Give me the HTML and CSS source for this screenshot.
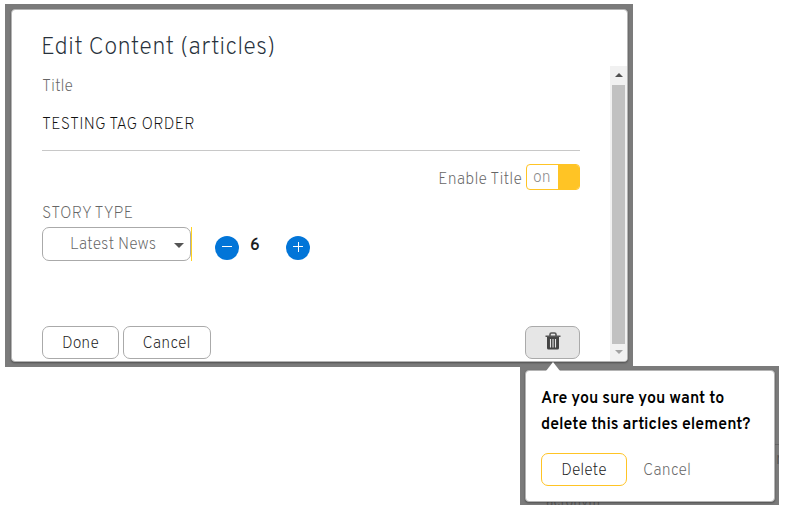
FILE: index.html
```
<!DOCTYPE html>
<html lang="en">
<head>
<meta charset="utf-8">
<title>Edit Content</title>
<link rel="stylesheet" href="styles.css">
</head>
<body>
<main class="backdrop">
  <section class="dialog">
    <h1 class="heading">Edit Content (articles)</h1>
    <div class="content">
      <form class="form">
        <div class="label">Title</div>
        <div class="title-value">TESTING TAG ORDER</div>
        <div class="enable-row">
          <span class="enable-text">Enable Title</span>
          <div class="toggle"><span class="toggle-text">on</span><i class="toggle-knob"></i></div>
        </div>
        <div class="story-label">STORY TYPE</div>
        <div class="story-row">
          <div class="select"><span class="select-text">Latest News</span><i class="caret"></i></div>
          <i class="divider"></i>
          <button type="button" class="round minus"><svg width="24" height="24" viewBox="0 0 24 24"><path d="M7 10.5h10"/></svg></button>
          <b class="count">6</b>
          <button type="button" class="round"><svg width="24" height="24" viewBox="0 0 24 24"><path d="M7 10.5h10M12.5 6v10"/></svg></button>
        </div>
        <div class="actions">
          <button type="button" class="btn done">Done</button>
          <button type="button" class="btn cancel">Cancel</button>
          <button type="button" class="btn trash" aria-label="Delete">
            <svg width="16" height="18" viewBox="0 0 16 18"><path class="lid" d="M.5 4.200h15M5 4V2.500Q5 1 6.500 1h3Q11 1 11 2.500V4"/><path class="can" d="M2 5h12v11q0 1.500-1.500 1.500h-9Q2 17.500 2 16z"/><path class="slots" d="M5.500 7v8.500M8 7v8.500M10.500 7v8.500"/></svg>
          </button>
        </div>
      </form>
      <div class="scrollbar"><i class="arrow up"></i><i class="thumb"></i><i class="arrow down"></i></div>
    </div>
  </section>
</main>
<aside class="popover-backdrop">
  <div class="page-behind"><span class="ghost">acronym</span><i class="ghost-line"></i><span class="ghost-edge">r</span></div>
  <section class="popover">
    <p class="question">Are you sure you want to<br>delete this articles element?</p>
    <div class="confirm">
      <button type="button" class="btn delete">Delete</button>
      <span class="dismiss">Cancel</span>
    </div>
  </section>
</aside>
</body>
</html>
```
FILE: styles.css
```
* { box-sizing: border-box; }
body {
  margin: 0;
  height: 509px;
  position: relative;
  overflow: hidden;
  background: #fff;
  font: 200 16px/24px Overpass, Roboto, "Liberation Sans", sans-serif;
  color: #666;
}
button { font: inherit; padding: 0; }
.backdrop {
  width: 628px;
  height: 363px;
  margin: 4px 0 0 5px;
  padding: 5px 5px 5px 6px;
  background: #7b7b7b;
  display: flow-root;
}
.dialog {
  height: 353px;
  display: flex;
  flex-direction: column;
  border: 1px solid #b4b4b4;
  border-radius: 4px;
  background: #fff;
  box-shadow: 0 1px 2px rgba(0, 0, 0, .35);
  overflow: hidden;
}
.heading {
  margin: 0;
  height: 56px;
  padding: 22px 0 0 29px;
  font-size: 24px;
  font-weight: 200;
  line-height: 32px;
  letter-spacing: .17px;
  color: #27313b;
}
.content { flex: 1; display: flex; min-height: 0; }
.form { width: 568px; margin-right: 30px; padding-left: 30px; }
.label { height: 37px; padding-top: 9px; }
.title-value {
  height: 48px;
  padding-top: 10px;
  border-bottom: 1px solid #c8c8c8;
  letter-spacing: .23px;
  color: #111;
}
.enable-row { display: flex; justify-content: flex-end; gap: 4px; margin-top: 13px; height: 26px; }
.enable-text { padding-top: 4px; letter-spacing: .17px; }
.toggle {
  width: 54px;
  height: 26px;
  display: flex;
  justify-content: space-between;
  border: 1px solid #ffc425;
  border-radius: 4px;
  overflow: hidden;
  color: #888;
}
.toggle-text { padding: 1px 0 0 6px; }
.toggle-knob { width: 21px; background: #ffc425; }
.story-label { margin-top: 11px; height: 26px; padding-top: 1px; letter-spacing: .3px; }
.story-row { display: flex; height: 34px; }
.select {
  width: 149px;
  display: flex;
  justify-content: space-between;
  align-items: center;
  padding: 0 6px 0 27px;
  border: 1px solid #aaa;
  border-radius: 7px;
}
.select-text { padding-top: 2px; letter-spacing: .1px; }
.caret { border: 5px solid transparent; border-top-color: #555; border-bottom: 0; margin-top: 3px; }
.divider { width: 1px; background: #ffd21f; }
.round { width: 24px; height: 24px; margin: 9px 0 0; border: 0; border-radius: 50%; background: #0275d8; }
.round svg { display: block; fill: none; stroke: #fff; }
.minus { margin-left: 23px; }
.count { width: 47px; padding: 7px 0 0 11px; color: #1b1e21; font-weight: 600; }
.actions { display: flex; margin-top: 65px; height: 33px; }
.btn { height: 33px; border: 1px solid #aaa; border-radius: 7px; background: #fff; color: #222; padding-top: 2px; }
.done { width: 77px; margin-right: 4px; }
.cancel { width: 88px; padding-right: 1px; }
.trash { width: 55px; margin-left: auto; background: #e6e6e6; padding: 0; }
.trash svg { display: block; margin: -3px auto 0; fill: none; }
.lid { stroke: #555; stroke-width: 1.6; }
.can { fill: #444; }
.slots { stroke: #e6e6e6; stroke-width: 1.1; }
.scrollbar { width: 17px; display: flex; flex-direction: column; align-items: center; background: #f1f1f1; }
.thumb { flex: 1; width: 13px; background: #c1c1c1; }
.arrow { border: 4px solid transparent; }
.up { border-top: 0; border-bottom-color: #505050; margin: 7px 0 8px; }
.down { border-bottom: 0; border-top-color: #a3a3a3; margin: 6px 0 7px; }
.popover-backdrop {
  position: absolute;
  left: 520px;
  top: 366px;
  width: 259px;
  height: 139px;
  padding: 4px 4px 4px 5px;
  background: #7b7b7b;
}
.popover {
  position: relative;
  height: 132px;
  padding: 15px 15px 0;
  border: 1px solid #b4b4b4;
  border-radius: 4px;
  background: #fff;
  box-shadow: 0 1px 2px rgba(0, 0, 0, .35);
}
.popover::before {
  content: "";
  position: absolute;
  left: 20px;
  top: -9px;
  border: 7px solid transparent;
  border-top: 0;
  border-bottom: 9px solid #fff;
}
.question { margin: 0; line-height: 26px; letter-spacing: .03px; color: #000; font-weight: 600; white-space: nowrap; }
.confirm { display: flex; align-items: center; margin-top: 15px; }
.delete { width: 86px; border-color: #ffc425; margin-right: 16px; }
.dismiss { padding-top: 2px; }
.page-behind { position: absolute; inset: 0; overflow: hidden; color: #555; font-weight: 300; }
.ghost { position: absolute; left: 26px; top: 127px; font-size: 14px; line-height: 20px; }
.ghost-line { position: absolute; right: 0; top: 78px; width: 4px; height: 1px; background: #666; }
.ghost-edge { position: absolute; left: 256px; top: 82px; }
```
